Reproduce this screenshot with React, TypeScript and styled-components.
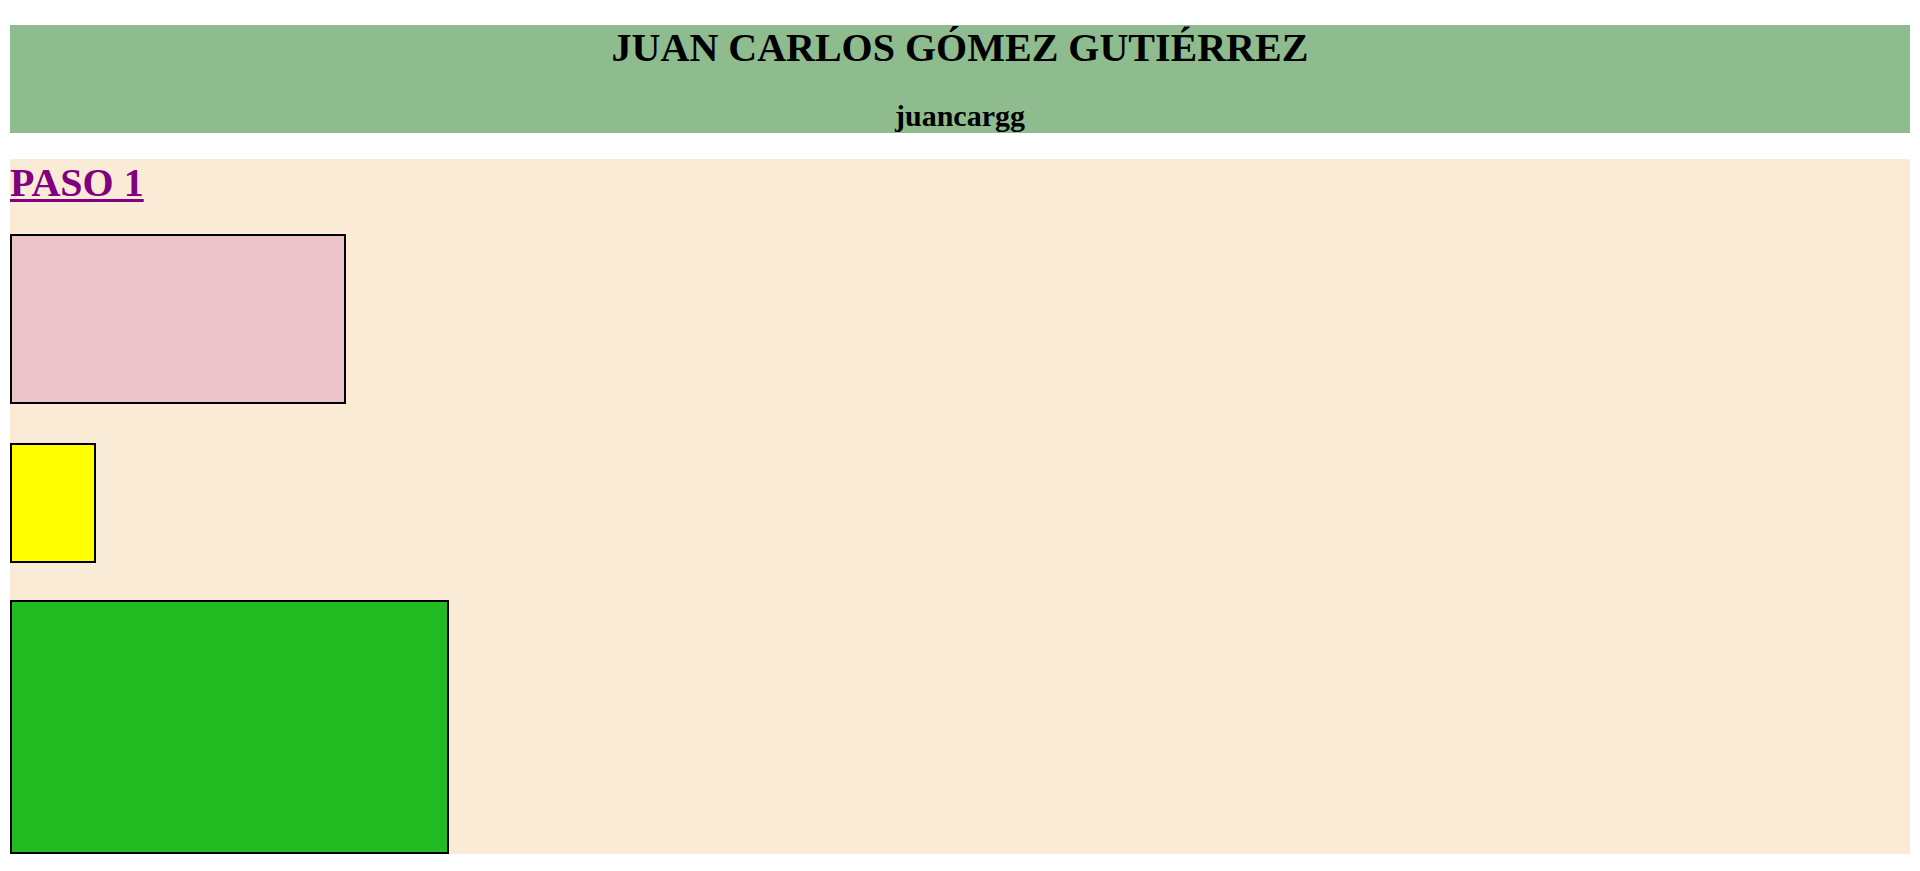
import React from "react";
import styled, { createGlobalStyle } from "styled-components";

const GlobalStyle = createGlobalStyle`
  html, body {
    margin: 0;
    padding: 0;
    background: #ffffff;
  }
  body {
    padding: 25px 10px 0 10px;
    font-family: "Liberation Serif", "Times New Roman", serif;
    color: #000000;
  }
`;

const Header = styled.header`
  height: 108px;
  background: #8fbc8f;
  display: flex;
  flex-direction: column;
  align-items: center;
`;

const Title = styled.h1`
  margin: 0;
  font-size: 40px;
  line-height: 46px;
  font-weight: bold;
`;

const Subtitle = styled.h2`
  margin: 28px 0 0 0;
  font-size: 30px;
  line-height: 34px;
  font-weight: bold;
`;

const Section = styled.section`
  margin-top: 26px;
  background: #faebd7;
  display: flex;
  flex-direction: column;
  align-items: flex-start;
`;

const StepHeading = styled.h1`
  margin: 0;
  font-size: 40px;
  line-height: 47px;
  font-weight: bold;
`;

const StepLink = styled.a`
  color: #800080;
  text-decoration: underline;
  text-decoration-thickness: 3px;
  text-underline-offset: 3px;
`;

const Box = styled.div<{ $w: number; $h: number; $bg: string; $mt: number }>`
  box-sizing: border-box;
  width: ${(p) => p.$w}px;
  height: ${(p) => p.$h}px;
  margin-top: ${(p) => p.$mt}px;
  background: ${(p) => p.$bg};
  border: 2px solid #000000;
`;

export default function App() {
  return (
    <>
      <GlobalStyle />
      <Header>
        <Title>JUAN CARLOS GÓMEZ GUTIÉRREZ</Title>
        <Subtitle>juancargg</Subtitle>
      </Header>
      <Section>
        <StepHeading>
          <StepLink href="#paso1">PASO 1</StepLink>
        </StepHeading>
        <Box $w={336} $h={170} $bg="#ebc3c8" $mt={28} />
        <Box $w={86} $h={120} $bg="#ffff00" $mt={39} />
        <Box $w={439} $h={254} $bg="#22bb22" $mt={37} />
      </Section>
    </>
  );
}
